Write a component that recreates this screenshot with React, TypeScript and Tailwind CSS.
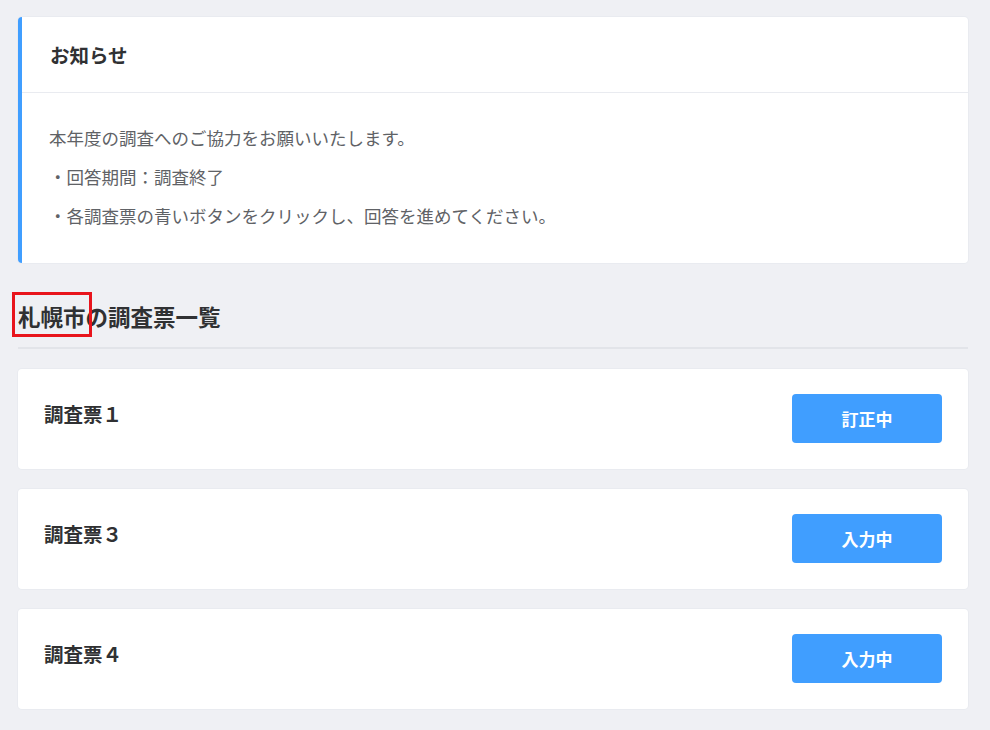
const surveys = [
  { id: 1, name: "調査票１", status: "訂正中" },
  { id: 3, name: "調査票３", status: "入力中" },
  { id: 4, name: "調査票４", status: "入力中" },
];

const font = { fontFamily: '"Noto Sans CJK JP", "Noto Sans", sans-serif' };

export default function App() {
  return (
    <div className="min-h-[730px] bg-[#eff0f4] pl-[18px] pr-[22px] pt-[17px] pb-5" style={font}>
      {/* notice */}
      <section className="rounded bg-white border-l-4 border-[#409eff] shadow-[0_0_0_1px_#e9ebf0]">
        <div className="h-[76px] flex items-center px-7 border-b border-[#e9ebf0]">
          <h2 className="text-[19.5px] font-bold text-[#303133]">お知らせ</h2>
        </div>
        <div className="px-[27px] pt-[25px] pb-[28px] text-[17.5px] leading-[39px] text-[#606266]">
          <p>本年度の調査へのご協力をお願いいたします。</p>
          <p>・回答期間：調査終了</p>
          <p>・各調査票の青いボタンをクリックし、回答を進めてください。</p>
        </div>
      </section>

      <div className="mt-[38px] border-b-2 border-[#e2e4e9] pb-4">
        <h1 className="text-[22.5px] font-bold text-[#303133] leading-[30px]">
          <span className="relative">
            札幌市
            <span className="absolute -left-[6px] -right-[6px] -top-[8px] -bottom-[5px] border-[3px] border-[#e8141c]" />
          </span>
          の調査票一覧
        </h1>
      </div>

      <div className="mt-5 flex flex-col gap-5">
        {surveys.map((s) => (
          <div
            key={s.id}
            className="h-[100px] rounded bg-white shadow-[0_0_0_1px_#e9ebf0] flex items-start justify-between px-[26px] pt-[25px]"
          >
            <div className="text-[19.5px] font-bold text-[#303133] leading-[40px]">{s.name}</div>
            <button className="w-[150px] h-[49px] rounded bg-[#409eff] text-white text-[17px] font-bold">
              {s.status}
            </button>
          </div>
        ))}
      </div>
    </div>
  );
}
